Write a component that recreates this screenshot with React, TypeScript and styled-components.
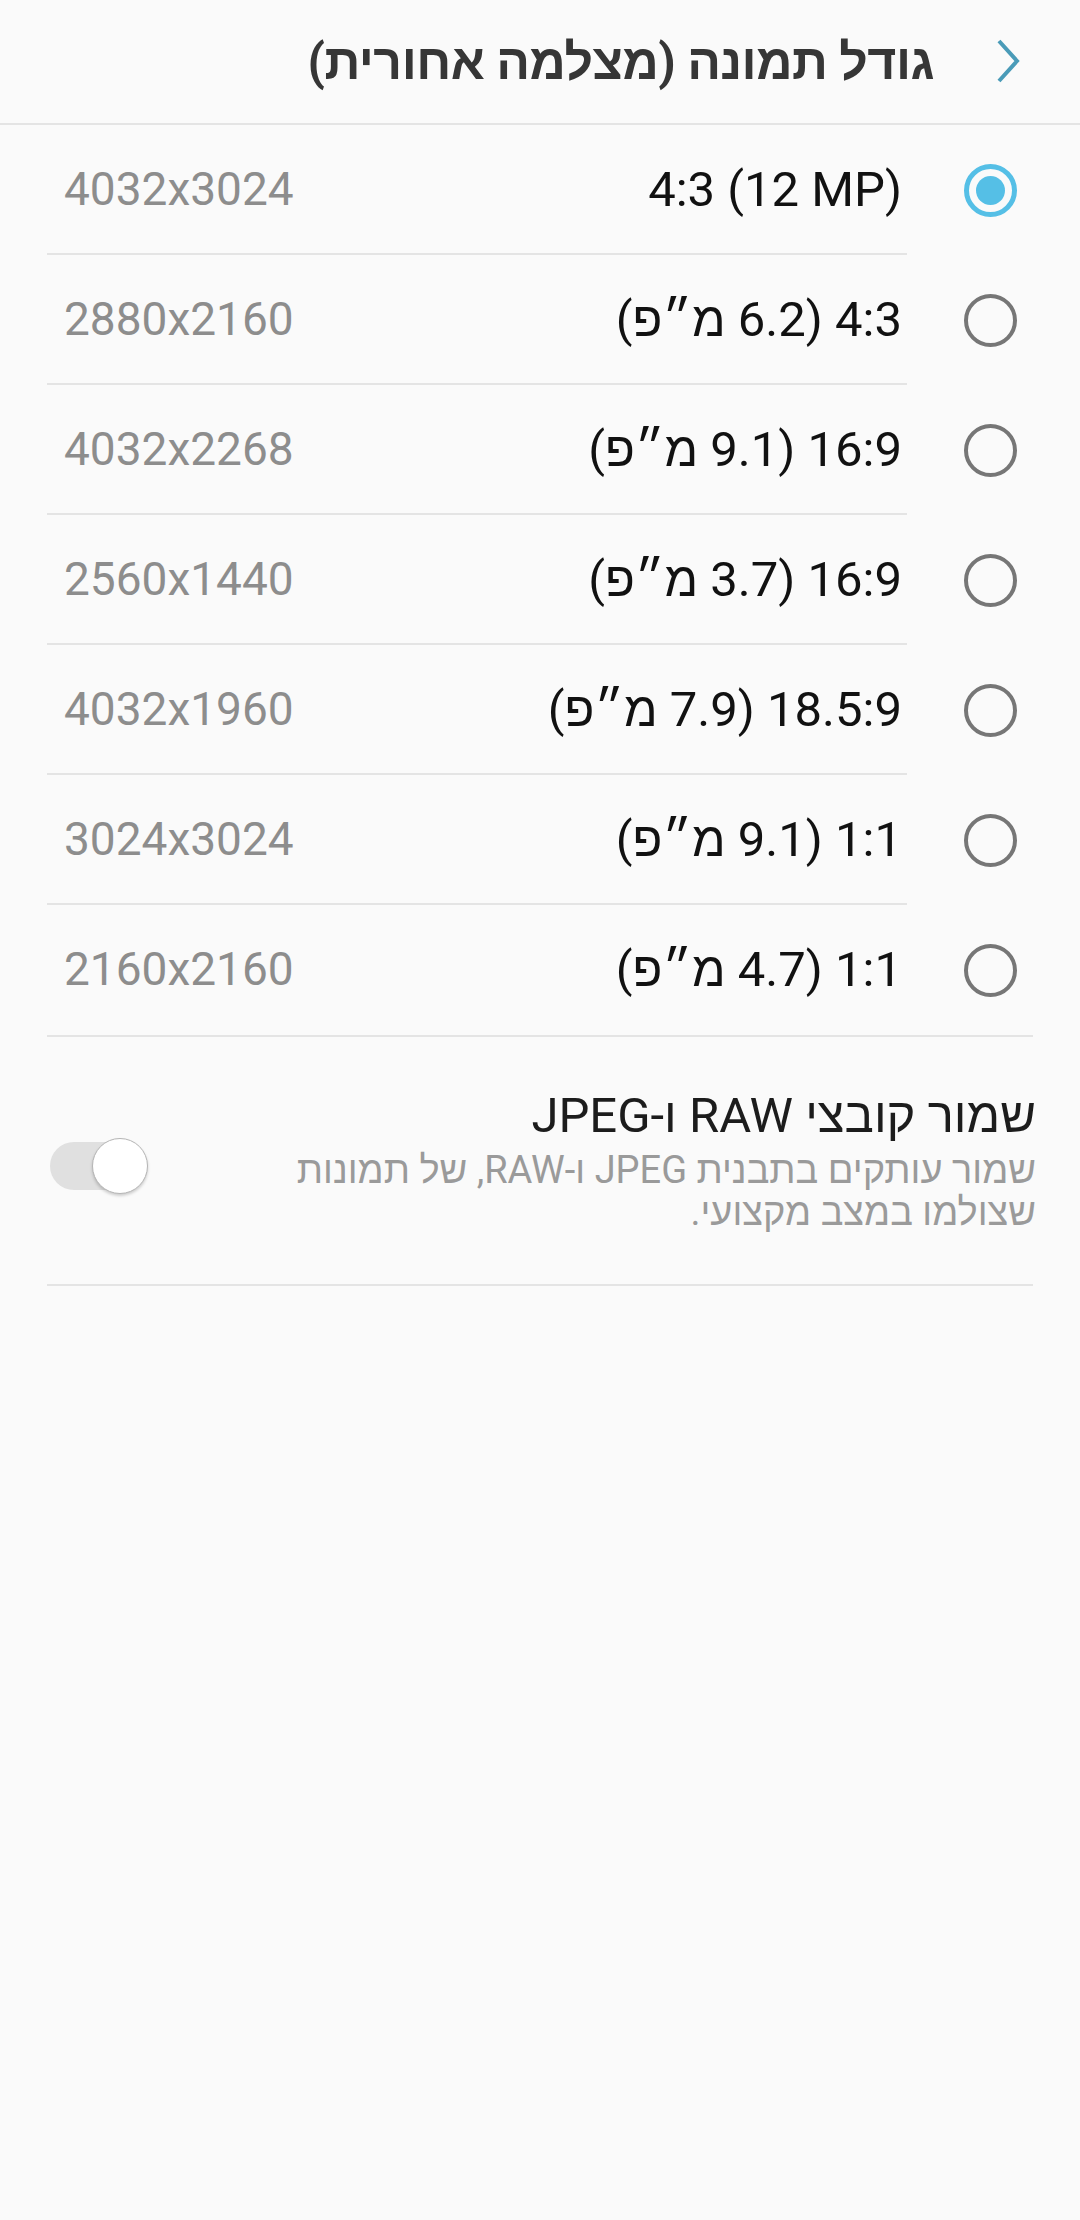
import styled, { createGlobalStyle } from "styled-components"

const GlobalStyle = createGlobalStyle`
  html, body {
    margin: 0;
    padding: 0;
    background: #fafafa;
  }
  body {
    font-family: Roboto, "Liberation Sans", sans-serif;
  }
`

const sizes = [
  { label: "4:3 (12 MP)", res: "4032x3024" },
  { label: "4:3 (6.2 מ״פ)", res: "2880x2160" },
  { label: "16:9 (9.1 מ״פ)", res: "4032x2268" },
  { label: "16:9 (3.7 מ״פ)", res: "2560x1440" },
  { label: "18.5:9 (7.9 מ״פ)", res: "4032x1960" },
  { label: "1:1 (9.1 מ״פ)", res: "3024x3024" },
  { label: "1:1 (4.7 מ״פ)", res: "2160x2160" },
]

export default function App() {
  const selected = 0
  return (
    <>
      <GlobalStyle />
      <Page dir="rtl">
        <Header>
          <BackButton aria-label="back">
            <svg width="28" height="46" viewBox="0 0 28 46">
              <polyline points="5,3 23,23 5,43" fill="none" stroke="#4a9bb8" strokeWidth="4" strokeLinejoin="miter" />
            </svg>
          </BackButton>
          <Title>גודל תמונה (מצלמה אחורית)</Title>
        </Header>

        <List>
          {sizes.map((s, i) => (
            <Item key={s.res}>
              <RadioCell>
                <Radio $checked={i === selected} />
              </RadioCell>
              <Content $last={i === sizes.length - 1}>
                <Label>{s.label}</Label>
                <Resolution>{s.res}</Resolution>
              </Content>
            </Item>
          ))}
        </List>
        <Divider />

        <SwitchRow>
          <SwitchText>
            <SwitchTitle>שמור קובצי RAW ו-JPEG</SwitchTitle>
            <SwitchSub>שמור עותקים בתבנית JPEG ו-RAW, של תמונות שצולמו במצב מקצועי.</SwitchSub>
          </SwitchText>
          <Toggle>
            <Thumb />
          </Toggle>
        </SwitchRow>
        <Divider />
      </Page>
    </>
  )
}

const Page = styled.div`
  min-height: 2220px;
  background: #fafafa;
`

const Header = styled.header`
  display: flex;
  align-items: center;
  height: 123px;
  padding-right: 58px;
  gap: 60px;
  border-bottom: 2px solid #e4e4e4;
`

const BackButton = styled.div`
  display: flex;
  align-items: center;
  margin-top: -2px;
`

const Title = styled.h1`
  margin: 0;
  font-family: Roboto, "Liberation Sans", sans-serif;
  font-weight: 700;
  font-size: 50px;
  color: #363636;
  letter-spacing: -0.5px;
`

const List = styled.div`
  display: flex;
  flex-direction: column;
`

const Item = styled.div`
  display: flex;
  align-items: stretch;
  height: 130px;
`

const RadioCell = styled.div`
  width: 173px;
  display: flex;
  align-items: center;
  justify-content: flex-start;
  padding-right: 63px;
  box-sizing: border-box;
`

const Radio = styled.span<{ $checked: boolean }>`
  width: 53px;
  height: 53px;
  box-sizing: border-box;
  border-radius: 50%;
  border: ${p => (p.$checked ? "5px solid #55bfe6" : "4px solid #767676")};
  display: flex;
  align-items: center;
  justify-content: center;
  &::after {
    content: "";
    display: ${p => (p.$checked ? "block" : "none")};
    width: 29px;
    height: 29px;
    border-radius: 50%;
    background: #55bfe6;
  }
`

const Content = styled.div<{ $last: boolean }>`
  flex: 0 0 860px;
  display: flex;
  align-items: center;
  justify-content: space-between;
  padding: 0 5px 0 17px;
  box-sizing: border-box;
  border-bottom: 2px solid ${p => (p.$last ? "transparent" : "#e4e4e4")};
`

const Label = styled.span.attrs({ dir: "auto" })`
  font-size: 49px;
  color: #111;
  text-align: right;
`

const Resolution = styled.span.attrs({ dir: "auto" })`
  font-size: 46px;
  color: #8d8d8d;
`

const Divider = styled.div`
  height: 2px;
  margin: 0 47px;
  background: #e4e4e4;
`

const SwitchRow = styled.div`
  display: flex;
  align-items: center;
  justify-content: space-between;
  height: 247px;
  padding: 0 44px 0 50px;
  box-sizing: border-box;
`

const SwitchText = styled.div`
  width: 800px;
  display: flex;
  flex-direction: column;
  gap: 5px;
`

const SwitchTitle = styled.div`
  font-size: 49px;
  color: #1c1c1c;
  line-height: 56px;
`

const SwitchSub = styled.div`
  font-size: 38px;
  color: #9a9a9a;
  line-height: 42px;
`

const Toggle = styled.div`
  position: relative;
  width: 96px;
  height: 48px;
  border-radius: 24px;
  background: #e0e0e0;
  margin-top: 10px;
`

const Thumb = styled.div`
  position: absolute;
  right: -2px;
  top: -4px;
  width: 56px;
  height: 56px;
  box-sizing: border-box;
  border-radius: 50%;
  background: #fff;
  border: 1.5px solid #b5b5b5;
  box-shadow: 0 2px 3px rgba(0, 0, 0, 0.18);
`
